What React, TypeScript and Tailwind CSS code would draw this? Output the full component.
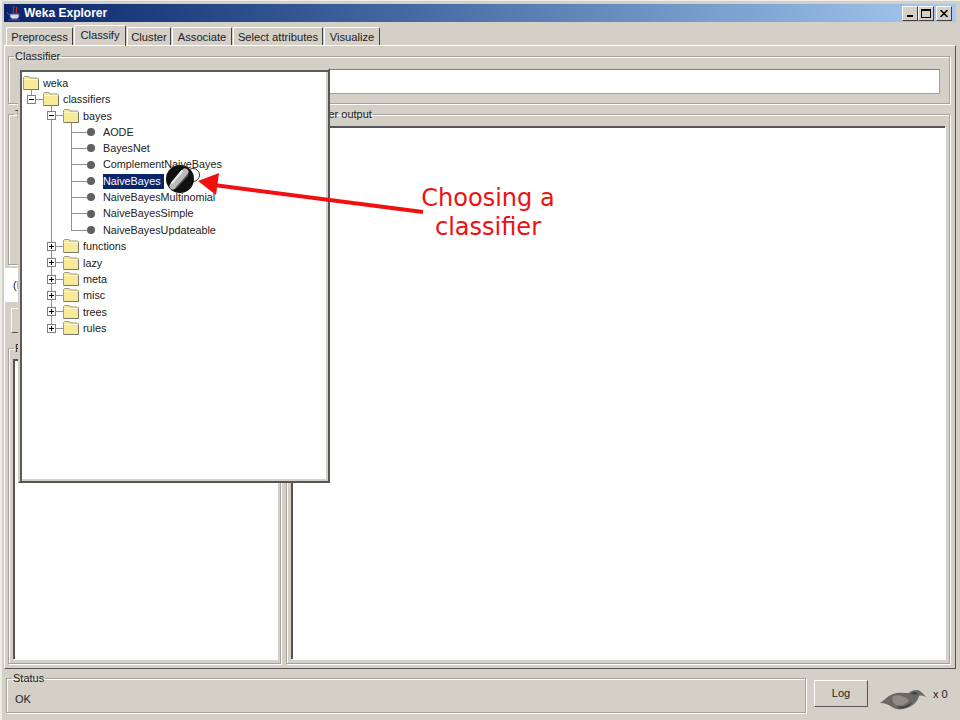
import type { ReactNode } from 'react'

const TABS = [
  { label: 'Preprocess', w: 'w-[67px]' },
  { label: 'Classify', w: 'w-[52px]', active: true },
  { label: 'Cluster', w: 'w-[44px]' },
  { label: 'Associate', w: 'w-[60px]' },
  { label: 'Select attributes', w: 'w-[90px]' },
  { label: 'Visualize', w: 'w-[56px]' },
]

const LEAVES = ['AODE', 'BayesNet', 'ComplementNaiveBayes', 'NaiveBayes', 'NaiveBayesMultinomial', 'NaiveBayesSimple', 'NaiveBayesUpdateable']
const PACKAGES = ['functions', 'lazy', 'meta', 'misc', 'trees', 'rules']

function Group({ title, className, children }: { title: string; className?: string; children?: ReactNode }) {
  return (
    <fieldset className={`min-w-0 border border-[#a5a29b] shadow-[inset_1px_1px_0_#fff,1px_1px_0_#fff] ${className ?? ''}`}>
      <legend className="ml-[5px] px-px text-[11px] leading-[13px] text-[#222]">{title}</legend>
      {children}
    </fieldset>
  )
}

function Folder() {
  return (
    <svg width="16" height="14" viewBox="0 0 16 14" className="shrink-0">
      <path d="M0.5 3.5V1.5L1.5 0.5H6L7 2H14.5L15.5 3V13.5H0.5Z" fill="#f7eb9a" stroke="#9a9a88" />
      <path d="M1.5 3.5H14.5" stroke="#fff8c8" fill="none" />
      <path d="M15.5 4V13.5H1" stroke="#77776a" fill="none" />
    </svg>
  )
}

function Expander({ open }: { open: boolean }) {
  return (
    <>
      <span className="relative h-[9px] w-[9px] shrink-0 border border-[#808080] bg-white">
        <span className="absolute left-[1px] top-[3px] h-px w-[5px] bg-black" />
        {!open && <span className="absolute left-[3px] top-[1px] h-[5px] w-px bg-black" />}
      </span>
      <span className="h-px w-[7px] shrink-0 bg-[#909090]" />
    </>
  )
}

function TreeRow({ pad, open, label }: { pad: string; open?: boolean; label: string }) {
  return (
    <div className={`flex h-[16.33px] items-center ${pad}`}>
      {open !== undefined && <Expander open={open} />}
      <Folder />
      <span className="ml-[4px] text-[10.8px] text-[#222]">{label}</span>
    </div>
  )
}

function ClassifierTree() {
  return (
    <div className="absolute left-[18px] top-[68px] h-[415px] w-[312px] border-2 border-t-[#d4d0c8] border-l-[#d4d0c8] border-r-[#555] border-b-[#555] bg-white pt-[5px] shadow-[inset_2px_2px_0_#5c5c5c,inset_-2px_-2px_0_#d4d0c8]">
      {/* Tree guide lines */}
      <span className="absolute left-[11px] top-[20px] h-[6px] w-px bg-[#909090]" />
      <span className="absolute left-[31px] top-[36px] h-[222px] w-px bg-[#909090]" />
      <span className="absolute left-[51px] top-[53px] h-[108px] w-px bg-[#909090]" />
      <TreeRow pad="pl-[3px]" label="weka" />
      <TreeRow pad="pl-[7px]" open label="classifiers" />
      <TreeRow pad="pl-[27px]" open label="bayes" />
      {LEAVES.map((leaf) => (
        <div key={leaf} className="flex h-[16.33px] items-center pl-[51px]">
          <span className="h-px w-[16px] bg-[#909090]" />
          <span className="h-[8px] w-[8px] rounded-full bg-[#606060]" />
          <span
            className={`ml-[8px] pr-[3px] text-[10.8px] leading-[15px] ${leaf === 'NaiveBayes' ? 'bg-[#0a246a] text-white' : 'text-[#222]'}`}
          >
            {leaf}
          </span>
        </div>
      ))}
      {PACKAGES.map((name) => (
        <TreeRow key={name} pad="pl-[27px]" open={false} label={name} />
      ))}
    </div>
  )
}

function Annotation() {
  return (
    <>
      <svg width="960" height="720" viewBox="0 0 960 720" className="pointer-events-none absolute left-0 top-0">
        <path d="M423 212L214 185" stroke="#f01010" strokeWidth="4" />
        <path d="M198 181L219 173L216 195Z" fill="#f01010" />
        <circle cx="193" cy="175" r="6.5" fill="none" stroke="#333" strokeWidth="1" />
        <circle cx="180" cy="179" r="14" fill="#111" />
        <path d="M173 186L185 172" stroke="#bbb" strokeWidth="7" strokeLinecap="round" />
        <path d="M172 183L182 171" stroke="#eee" strokeWidth="2" strokeLinecap="round" />
        <path d="M176 188L188 175" stroke="#555" strokeWidth="1.5" />
      </svg>
      <div className="absolute left-[388px] top-[184px] w-[200px] text-center font-['DejaVu_Sans',sans-serif] text-[24px] leading-[29px] text-[#f01010]">
        Choosing a
        <br />
        classifier
      </div>
    </>
  )
}

function WindowButton({ children }: { children: ReactNode }) {
  return (
    <span className="flex h-[15px] w-[16px] items-center justify-center border border-t-white border-l-white border-r-[#404040] border-b-[#404040] bg-[#d4d0c8]">
      {children}
    </span>
  )
}

export default function App() {
  return (
    <div className="relative flex h-[720px] w-[960px] flex-col overflow-hidden bg-[#d4d0c8] px-[3px] pb-[4px] pt-[4px] shadow-[inset_2px_1px_0_#eeece6] font-['Liberation_Sans',Arial,sans-serif]">
      {/* Title bar */}
      <div className="mx-px flex h-[18px] shrink-0 items-center bg-gradient-to-r from-[#0a246a] to-[#a6caf0] pl-[2px] pr-[4px]">
        <svg width="16" height="16" viewBox="0 0 16 16" className="shrink-0">
          <path d="M7 1C10 3 5 5 8 8M10 2C12 4 9 5 11 8" stroke="#c03030" strokeWidth="1.2" fill="none" />
          <path d="M4 9H13V12L11 14H6L4 12Z" fill="#d8d8e8" stroke="#5050a0" />
          <path d="M1 7L3 10M2 15H14" stroke="#5050a0" />
        </svg>
        <span className="ml-[2px] text-[12px] font-bold text-white">Weka Explorer</span>
        <div className="ml-auto flex">
          <WindowButton>
            <span className="mt-[6px] h-[2px] w-[6px] bg-black" />
          </WindowButton>
          <WindowButton>
            <span className="h-[9px] w-[10px] border border-t-2 border-black" />
          </WindowButton>
          <span className="w-[2px]" />
          <WindowButton>
            <svg width="8" height="7" viewBox="0 0 8 7">
              <path d="M0.5 0L7.5 7M7.5 0L0.5 7" stroke="#000" strokeWidth="1.5" />
            </svg>
          </WindowButton>
        </div>
      </div>

      {/* Tabs */}
      <div className="flex h-[23px] shrink-0 items-end gap-px pl-[3px] pt-[3px]">
        {TABS.map((tab) => (
          <div
            key={tab.label}
            className={`flex shrink-0 items-center justify-center rounded-t-[2px] border-t border-l border-r border-t-white border-l-white border-r-[#404040] text-[11.2px] text-[#222] ${tab.w} ${tab.active ? 'z-10 -mb-px h-[21px] pb-px' : 'h-[18px] pt-[2px]'}`}
          >
            {tab.label}
          </div>
        ))}
      </div>

      {/* Tab panel */}
      <div className="mx-px flex min-h-0 flex-1 flex-col border border-t-white border-l-white border-r-[#555] border-b-[#555] pb-[4px] pl-[3px] pr-[5px] pt-[4px]">
        <Group title="Classifier" className="flex h-[54px] shrink-0 justify-end pr-[9px] pt-[6px]">
          <div className="h-[25px] w-[611px] border border-t-[#808080] border-l-[#808080] border-r-[#a5a29b] border-b-[#a5a29b] bg-white" />
        </Group>

        <div className="mt-[4px] flex min-h-0 flex-1 gap-[5px]">
          {/* Left column */}
          <div className="flex w-[273px] shrink-0 flex-col">
            <Group title="Test options" className="h-[157px] shrink-0" />
            <div className="-ml-[3px] mt-[3px] flex h-[34px] shrink-0 items-center bg-white pl-[8px] text-[11px] text-[#222]">
              (Nom) class
            </div>
            <div className="ml-[3px] mt-[6px] h-[25px] shrink-0 border border-t-white border-l-white border-r-[#555] border-b-[#555]" />
            <Group title="Result list (right-click for options)" className="mt-[9px] flex min-h-0 flex-1 flex-col">
              <div className="mb-[4px] ml-[4px] mr-[3px] mt-[4px] flex-1 border-t-2 border-l-2 border-t-[#555] border-l-[#555] bg-white shadow-[1px_1px_0_#fff]" />
            </Group>
          </div>

          {/* Right column */}
          <Group title="Classifier output" className="flex min-h-0 flex-1 flex-col">
            <div className="mb-[4px] ml-[4px] mr-[4px] mt-[5px] flex-1 border-t-2 border-l-2 border-t-[#555] border-l-[#555] bg-white shadow-[1px_1px_0_#fff]" />
          </Group>
        </div>
      </div>

      {/* Status */}
      <div className="flex h-[47px] shrink-0 items-start">
        <Group title="Status" className="ml-[3px] mt-[3px] h-[41px] w-[800px] shrink-0">
          <div className="ml-[8px] mt-[8px] text-[11px] leading-[13px] text-[#222]">OK</div>
        </Group>
        <div className="ml-[8px] mt-[11px] flex h-[27px] w-[54px] shrink-0 items-center justify-center border border-t-white border-l-white border-r-[#555] border-b-[#555] text-[11px] text-[#222]">
          Log
        </div>
        <svg width="47" height="22" viewBox="0 0 47 22" className="ml-[12px] mt-[20px] shrink-0">
          <path d="M0 14C4 12 7 7 13 5C18 3 24 4 29 4C32 1 37 0 40 2C43 4 44 6 46 8C43 7 41 6 39 7C38 12 33 17 27 19C22 21 16 21 12 18C9 16 5 14 0 14Z" fill="#6a6864" />
          <path d="M13 7C18 5 24 7 29 11C27 15 21 18 16 16C13 14 11 10 13 7Z" fill="#8f8c86" />
          <path d="M17 17C22 19 28 17 32 13C30 18 24 20 19 19Z" fill="#3c3a38" />
          <path d="M31 4C34 2 37 3 38 5C35 6 33 6 31 4Z" fill="#454340" />
        </svg>
        <span className="ml-[6px] mt-[17px] text-[11px] text-[#222]">x 0</span>
      </div>

      <ClassifierTree />
      <Annotation />
    </div>
  )
}
